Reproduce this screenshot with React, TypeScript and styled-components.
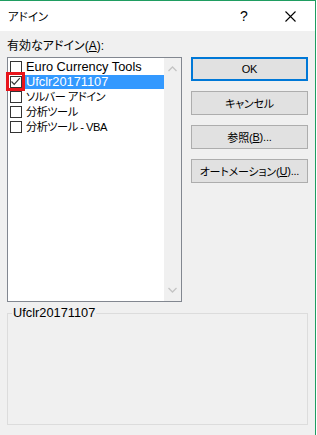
import styled, { createGlobalStyle } from "styled-components";

const GlobalStyle = createGlobalStyle`
  html, body {
    margin: 0;
    padding: 0;
    background: #ffffff;
  }
  body {
    font-family: "Liberation Sans", "Noto Sans CJK JP", sans-serif;
    font-size: 12px;
    font-feature-settings: "palt" 1;
    color: #000;
  }
`;

// cjk: names in Japanese are set a little tighter, like Meiryo UI
const ADDINS = [
  { name: "Euro Currency Tools", checked: false, cjk: false },
  { name: "Ufclr20171107", checked: true, cjk: false },
  { name: "ソルバー アドイン", checked: false, cjk: true },
  { name: "分析ツール", checked: false, cjk: true },
  { name: "分析ツール - VBA", checked: false, cjk: true },
];

const SELECTED = 1;

export default function App() {
  return (
    <>
      <GlobalStyle />
      <Window>
        <TitleBar>
          <Title>アドイン</Title>
          <TitleButtons>
            <HelpButton>?</HelpButton>
            <CloseButton>
              <svg width="11" height="11" viewBox="0 0 11 11">
                <path d="M0.5 0.5 L10.5 10.5 M10.5 0.5 L0.5 10.5" stroke="#000" strokeWidth="1.1" fill="none" />
              </svg>
            </CloseButton>
          </TitleButtons>
        </TitleBar>
        <Body>
          <Top>
            <ListColumn>
              <Label>
                有効なアドイン(<u>A</u>):
              </Label>
              <ListBox>
                <Items>
                  {ADDINS.map((item, i) => (
                    <Row key={item.name}>
                      <CheckWrap $focused={i === SELECTED}>
                        <CheckBox>
                          {item.checked && (
                            <svg width="11" height="11" viewBox="0 0 11 11">
                              <path d="M1.5 5.5 L4.2 8.3 L9.8 2.2" stroke="#333" strokeWidth="1.2" fill="none" />
                            </svg>
                          )}
                        </CheckBox>
                      </CheckWrap>
                      <ItemText $selected={i === SELECTED} $cjk={item.cjk}>
                        {item.name}
                      </ItemText>
                    </Row>
                  ))}
                </Items>
                <ScrollBar>
                  <svg width="9" height="6" viewBox="0 0 9 6">
                    <path d="M0.5 5 L4.5 1 L8.5 5" stroke="#c4c4c4" strokeWidth="1.3" fill="none" />
                  </svg>
                  <svg width="9" height="6" viewBox="0 0 9 6">
                    <path d="M0.5 1 L4.5 5 L8.5 1" stroke="#c4c4c4" strokeWidth="1.3" fill="none" />
                  </svg>
                </ScrollBar>
              </ListBox>
            </ListColumn>
            <Buttons>
              <Button $default>OK</Button>
              <Button>キャンセル</Button>
              <Button>
                参照(<u>B</u>)...
              </Button>
              <Button>
                オートメーション(<u>U</u>)...
              </Button>
            </Buttons>
          </Top>
          <GroupBox>
            <Legend>Ufclr20171107</Legend>
          </GroupBox>
        </Body>
      </Window>
    </>
  );
}

const Window = styled.div`
  width: 316px;
  height: 435px;
  box-sizing: border-box;
  border-top: 1px solid #1f9d61;
  border-right: 1px solid #1f9d61;
  display: flex;
  flex-direction: column;
  background: #f0f0f0;
`;

const TitleBar = styled.div`
  height: 30px;
  background: #ffffff;
  display: flex;
  align-items: center;
  justify-content: space-between;
  padding-left: 8px;
`;

const Title = styled.div`
  font-size: 11.5px;
`;

const TitleButtons = styled.div`
  display: flex;
  align-items: center;
`;

const HelpButton = styled.div`
  width: 46px;
  text-align: center;
  font-size: 14px;
`;

const CloseButton = styled.div`
  width: 46px;
  height: 30px;
  display: flex;
  align-items: center;
  justify-content: center;
  padding-right: 2px;
`;

const Body = styled.div`
  flex: 1;
  display: flex;
  flex-direction: column;
  padding: 9px 7px 10px 7px;
`;

const Top = styled.div`
  display: flex;
  gap: 9px;
`;

const ListColumn = styled.div`
  display: flex;
  flex-direction: column;
`;

const Label = styled.div`
  height: 17px;
  line-height: 12px;
  font-size: 12px;
`;

const ListBox = styled.div`
  width: 175px;
  height: 245px;
  box-sizing: border-box;
  border: 1px solid #828790;
  background: #ffffff;
  display: flex;
`;

const Items = styled.div`
  flex: 1;
  padding-top: 1px;
  display: flex;
  flex-direction: column;
`;

const Row = styled.div`
  height: 15px;
  display: flex;
  align-items: center;
`;

const CheckWrap = styled.div<{ $focused?: boolean }>`
  width: 19px;
  height: 19px;
  margin-left: -2px;
  box-sizing: border-box;
  display: flex;
  align-items: center;
  justify-content: center;
  border: 3px solid ${(p) => (p.$focused ? "#e8141b" : "transparent")};
  flex-shrink: 0;
`;

const CheckBox = styled.div`
  width: 12px;
  height: 12px;
  box-sizing: border-box;
  border: 1px solid #333333;
  background: #ffffff;
  display: flex;
  align-items: center;
  justify-content: center;
  & svg {
    flex-shrink: 0;
  }
`;

const ItemText = styled.div<{ $selected?: boolean; $cjk?: boolean }>`
  flex: 1;
  height: 14px;
  line-height: 14px;
  padding-left: 1px;
  white-space: nowrap;
  font-size: ${(p) => (p.$cjk ? "11.2px" : "12.8px")};
  letter-spacing: ${(p) => (p.$cjk ? "-0.5px" : "0")};
  background: ${(p) => (p.$selected ? "#3399ff" : "transparent")};
  color: ${(p) => (p.$selected ? "#ffffff" : "#000000")};
`;

const ScrollBar = styled.div`
  width: 17px;
  background: #f0f0f0;
  display: flex;
  flex-direction: column;
  justify-content: space-between;
  align-items: center;
  padding: 8px 0 8px;
`;

const Buttons = styled.div`
  display: flex;
  flex-direction: column;
  gap: 10px;
  padding-top: 17px;
`;

const Button = styled.div<{ $default?: boolean }>`
  width: 117px;
  height: 24px;
  box-sizing: border-box;
  border: ${(p) => (p.$default ? "2px solid #0078d7" : "1px solid #adadad")};
  background: #e1e1e1;
  display: flex;
  align-items: center;
  justify-content: center;
  font-size: 11px;
  letter-spacing: -0.2px;
  white-space: nowrap;
`;

const GroupBox = styled.div`
  margin-top: 11px;
  flex: 1;
  border: 1px solid #dcdcdc;
  position: relative;
`;

const Legend = styled.div`
  position: absolute;
  top: -8px;
  left: 4px;
  padding: 0 1px;
  background: #f0f0f0;
  font-size: 12.8px;
  line-height: 14px;
`;
